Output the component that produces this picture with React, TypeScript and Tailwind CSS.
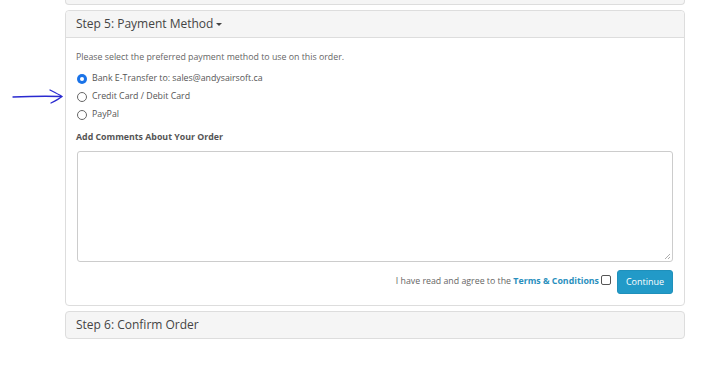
import React from "react";

const font = { fontFamily: '"Open Sans", "Liberation Sans", sans-serif' };

function Arrow() {
  return (
    <svg width="60" height="22" viewBox="0 0 60 22" className="absolute left-[10px] top-[86px]">
      <path
        d="M3 11 C 15 10.5, 35 10, 51 10.5"
        stroke="#2a2ad0"
        strokeWidth="1.3"
        fill="none"
        strokeLinecap="round"
      />
      <path
        d="M40 4 C 45 6.5, 49 8.5, 52 10.5 C 49 13, 45 15, 41 17"
        stroke="#2a2ad0"
        strokeWidth="1.3"
        fill="none"
        strokeLinecap="round"
      />
    </svg>
  );
}

function Radio({ checked, label }: { checked?: boolean; label: string }) {
  return (
    <label className="flex items-center h-[18px] gap-[5px]">
      <span
        className={
          checked
            ? "w-[10px] h-[10px] rounded-full bg-[#1a73e8] flex items-center justify-center"
            : "w-[10px] h-[10px] rounded-full border border-[#666] bg-white"
        }
      >
        {checked && <span className="w-[4px] h-[4px] rounded-full bg-white" />}
      </span>
      <span className="text-[8.8px] text-[#555]">{label}</span>
    </label>
  );
}

export default function App() {
  return (
    <div className="relative w-[710px] h-[380px] bg-white" style={font}>
      <Arrow />
      <div className="ml-[65px] w-[620px] flex flex-col gap-[5px]">
        {/* previous step, cut off */}
        <div className="h-[5px] bg-[#f5f5f5] border-x border-b border-[#ddd] rounded-b-[4px]" />

        {/* step 5 */}
        <div className="border border-[#ddd] rounded-[4px] bg-white">
          <div className="h-[27px] bg-[#f5f5f5] border-b border-[#ddd] rounded-t-[4px] flex items-center px-[10px]">
            <span className="text-[12px] text-[#444]">Step 5: Payment Method</span>
            <span className="ml-[3px] mt-[1px] w-0 h-0 border-x-[3px] border-x-transparent border-t-[3px] border-t-[#444]" />
          </div>
          <div className="px-[10px] pt-[12px] pb-[11px]">
            <p className="text-[8.8px] text-[#666] leading-[14px]">
              Please select the preferred payment method to use on this order.
            </p>
            <div className="mt-[6px] pl-[1px] flex flex-col">
              <Radio checked label="Bank E-Transfer to: sales@andysairsoft.ca" />
              <Radio label="Credit Card / Debit Card" />
              <Radio label="PayPal" />
            </div>
            <p className="mt-[6px] text-[8.8px] font-bold text-[#555] leading-[14px]">
              Add Comments About Your Order
            </p>
            <div className="mt-[7px] ml-[1px] mr-[1px] h-[111px] border border-[#ccc] rounded-[3px] relative">
              <svg width="7" height="7" viewBox="0 0 7 7" className="absolute right-[1px] bottom-[1px]">
                <path d="M6 1 L1 6 M6 4 L4 6" stroke="#999" strokeWidth="0.8" />
              </svg>
            </div>
            <div className="mt-[8px] mr-[1px] flex items-center justify-end">
              <span className="text-[8.8px] text-[#666]">
                I have read and agree to the{" "}
                <b className="text-[#2a8fbd]">Terms &amp; Conditions</b>
              </span>
              <span className="ml-[2px] -mt-[4px] w-[10px] h-[10px] border border-[#555] rounded-[2px] bg-white" />
              <button className="ml-[6px] w-[56px] h-[24px] rounded-[3px] bg-[#229ac8] border border-[#1f90bb] text-white text-[9px]">
                Continue
              </button>
            </div>
          </div>
        </div>

        {/* step 6 */}
        <div className="h-[28px] bg-[#f5f5f5] border border-[#ddd] rounded-[4px] flex items-center px-[10px]">
          <span className="text-[12px] text-[#444]">Step 6: Confirm Order</span>
        </div>
      </div>
    </div>
  );
}
